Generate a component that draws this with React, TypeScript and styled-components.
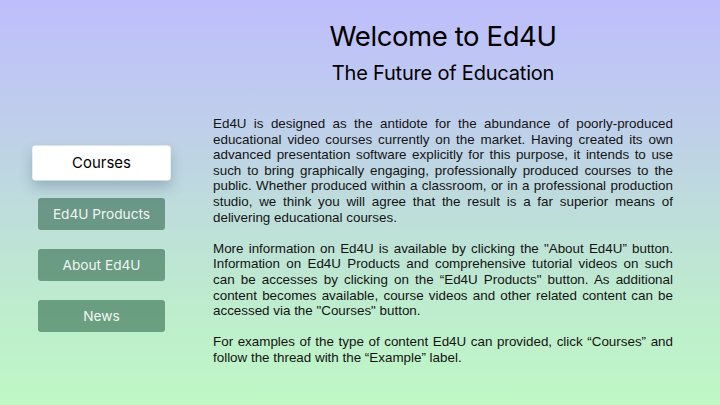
import React from "react"
import styled, { createGlobalStyle } from "styled-components"

const GlobalStyle = createGlobalStyle`
	html, body {
		margin: 0;
		padding: 0;
	}
	body {
		font-family: "Liberation Sans", Arial, sans-serif;
	}
`

const menu = ["Courses", "Ed4U Products", "About Ed4U", "News"]

const App: React.FC = () => {
	const active = "Courses"
	return (
		<Page>
			<GlobalStyle />
			<Sidebar>
				{menu.map((item) => (
					<MenuButton key={item} $active={item === active}>
						{item}
					</MenuButton>
				))}
			</Sidebar>
			<Main>
				<Header>
					<Title>Welcome to Ed4U</Title>
					<Subtitle>The Future of Education</Subtitle>
				</Header>
				<Body>
					Ed4U is designed as the antidote for the abundance of
					poorly-produced educational video courses currently on the
					market. Having created its own advanced presentation software
					explicitly for this purpose, it intends to use such to bring
					graphically engaging, professionally produced courses to the
					public. Whether produced within a classroom, or in a
					professional production studio, we think you will agree that
					the result is a far superior means of delivering educational
					courses.
				</Body>
				<Body>
					More information on Ed4U is available by clicking the "About
					Ed4U” button. Information on Ed4U Products and comprehensive
					tutorial videos on such can be accesses by clicking on the
					“Ed4U Products" button. As additional content becomes
					available, course videos and other related content can be
					accessed via the "Courses" button.
				</Body>
				<Body>
					For examples of the type of content Ed4U can provided, click
					“Courses” and follow the thread with the “Example” label.
				</Body>
			</Main>
		</Page>
	)
}

export default App

const Page = styled.div`
	display: flex;
	width: 720px;
	height: 405px;
	overflow: hidden;
	background: linear-gradient(
		180deg,
		#bebefc 0%,
		#bfcbef 25%,
		#bedcdc 50%,
		#beecce 75%,
		#bff8c5 100%
	);
`

const Sidebar = styled.nav`
	width: 203px;
	flex-shrink: 0;
	display: flex;
	flex-direction: column;
	align-items: center;
	gap: 19px;
	padding-top: 147px;
`

const MenuButton = styled.div<{ $active?: boolean }>`
	width: 127px;
	height: 32px;
	border-radius: 3px;
	display: flex;
	align-items: center;
	justify-content: center;
	font-family: Inter, "Liberation Sans", sans-serif;
	font-size: 13.7px;
	color: ${(p) => (p.$active ? "#000000" : "#f2f6f2")};
	background: ${(p) => (p.$active ? "#ffffff" : "rgba(28, 86, 58, 0.52)")};
	box-shadow: ${(p) => (p.$active ? "0 6px 12px rgba(60, 80, 110, 0.3)" : "none")};
	transform: ${(p) => (p.$active ? "scale(1.09)" : "none")};
`

const Main = styled.main`
	width: 460px;
	margin-left: 10px;
	display: flex;
	flex-direction: column;
`

const Header = styled.header`
	display: flex;
	flex-direction: column;
	align-items: center;
	padding-top: 17px;
	margin-bottom: 29px;
	color: #000;
	font-family: Inter, "Liberation Sans", sans-serif;
`

const Title = styled.h1`
	margin: 0 0 4px;
	font-size: 27.5px;
	font-weight: 400;
	line-height: 38px;
	letter-spacing: -0.4px;
`

const Subtitle = styled.h2`
	margin: 0;
	font-size: 20px;
	font-weight: 400;
	line-height: 28px;
	letter-spacing: -0.2px;
`

const Body = styled.p`
	margin: 0 0 15.6px;
	font-size: 13.4px;
	line-height: 15.6px;
	text-align: justify;
	color: #141414;
`
